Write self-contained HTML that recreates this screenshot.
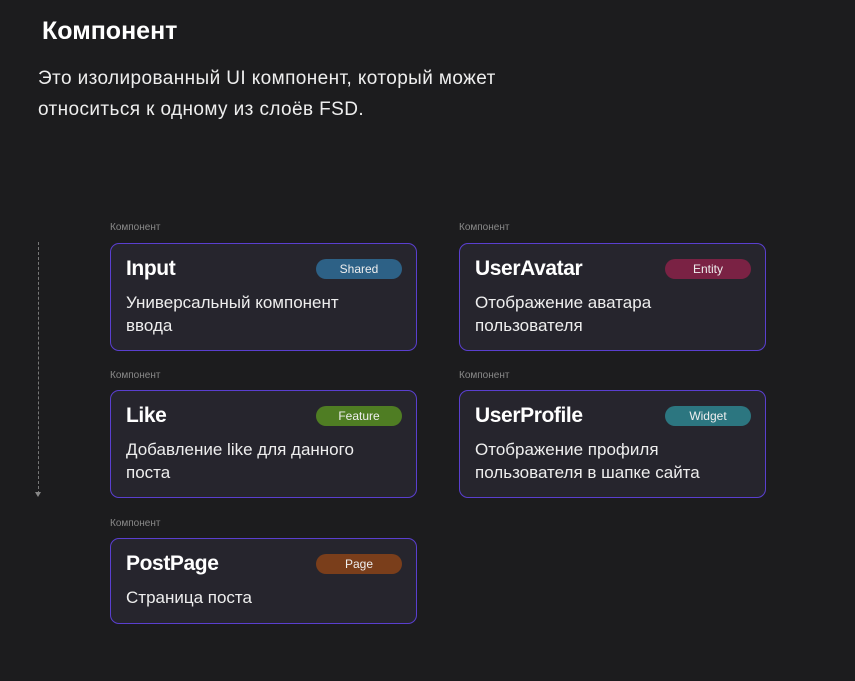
<!DOCTYPE html>
<html><head><meta charset="utf-8"><style>
body{margin:0;width:855px;height:681px;background:#1c1c1e;font-family:"Liberation Sans","DejaVu Sans",sans-serif;color:#fff;position:relative;overflow:hidden}
h1{position:absolute;left:42px;top:17px;margin:0;font-size:25px;font-weight:bold;letter-spacing:0px}
p.intro{position:absolute;left:38px;top:63px;margin:0;font-size:19px;line-height:31px;width:500px;color:#eee;letter-spacing:0.4px}
.lbl{position:absolute;font-size:10px;color:#8a8a8a}
.card{position:absolute;width:307px;background:#26252d;border:1.5px solid #5a3fcf;border-radius:9px;box-sizing:border-box}
.card .t{position:absolute;left:15px;top:13px;font-size:21px;font-weight:bold;letter-spacing:-0.4px}
.card .b{position:absolute;left:205px;top:15px;width:86px;height:20px;border-radius:10px;font-size:12px;text-align:center;line-height:20px;color:#eee}
.card .d{position:absolute;left:15px;top:47px;font-size:17px;line-height:23px;color:#eee}
.dash{position:absolute;left:38px;top:242px;height:252px;border-left:1px dashed #777}
.arr{position:absolute;left:35px;top:492px;width:0;height:0;border-left:3.5px solid transparent;border-right:3.5px solid transparent;border-top:5px solid #888}
</style></head><body>
<h1>Компонент</h1>
<p class="intro">Это изолированный UI компонент, который может относиться к одному из слоёв FSD.</p>
<div class="dash"></div><div class="arr"></div>

<div class="lbl" style="left:110px;top:222px">Компонент</div>
<div class="card" style="left:110px;top:243px;height:108px"><div class="t">Input</div><div class="b" style="background:#2d6186">Shared</div><div class="d">Универсальный компонент<br>ввода</div></div>

<div class="lbl" style="left:459px;top:222px">Компонент</div>
<div class="card" style="left:459px;top:243px;height:108px"><div class="t">UserAvatar</div><div class="b" style="background:#7a2244">Entity</div><div class="d">Отображение аватара<br>пользователя</div></div>

<div class="lbl" style="left:110px;top:370px">Компонент</div>
<div class="card" style="left:110px;top:390px;height:108px"><div class="t">Like</div><div class="b" style="background:#4f7d23">Feature</div><div class="d">Добавление like для данного<br>поста</div></div>

<div class="lbl" style="left:459px;top:370px">Компонент</div>
<div class="card" style="left:459px;top:390px;height:108px"><div class="t">UserProfile</div><div class="b" style="background:#2c7680">Widget</div><div class="d">Отображение профиля<br>пользователя в шапке сайта</div></div>

<div class="lbl" style="left:110px;top:518px">Компонент</div>
<div class="card" style="left:110px;top:538px;height:86px"><div class="t">PostPage</div><div class="b" style="background:#7a3e1b">Page</div><div class="d">Страница поста</div></div>
</body></html>
